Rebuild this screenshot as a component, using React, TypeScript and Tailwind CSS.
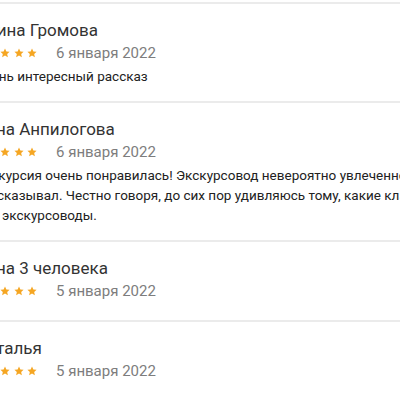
import React from 'react';

const reviews = [
  {
    name: 'Ирина Громова',
    date: '6 января 2022',
    lines: ['Очень интересный рассказ'],
  },
  {
    name: 'Анна Анпилогова',
    date: '6 января 2022',
    lines: [
      'Экскурсия очень понравилась! Экскурсовод невероятно увлеченно',
      'рассказывал. Честно говоря, до сих пор удивляюсь тому, какие классные',
      'там экскурсоводы.',
    ],
  },
  {
    name: 'Анна 3 человека',
    date: '5 января 2022',
    lines: [],
  },
  {
    name: 'Наталья',
    date: '5 января 2022',
    lines: [],
  },
];

function Star() {
  return (
    <svg width="10" height="10" viewBox="0 0 24 24" className="shrink-0">
      <path
        fill="#f5a623"
        d="M12 1l3.3 7.2 7.7.8-5.8 5.2 1.7 7.8L12 18l-6.9 4 1.7-7.8L1 9l7.7-.8z"
      />
    </svg>
  );
}

function Review({ r }: { r: (typeof reviews)[number] }) {
  const hasText = r.lines.length > 0;
  return (
    <div className={`border-t-2 border-[#ebebeb] pt-[14px] ${hasText ? 'pb-[15px]' : 'pb-[18px]'}`}>
      <div className="text-[17px] leading-[24px] text-[#333333] whitespace-nowrap">{r.name}</div>
      <div className="flex items-center h-[22px]">
        <div className="flex items-center gap-[3.5px] ml-[-2px]">
          <Star />
          <Star />
          <Star />
          <Star />
          <Star />
        </div>
        <span className="ml-[19px] text-[15px] text-[#7d7d7d] whitespace-nowrap">{r.date}</span>
      </div>
      {hasText && (
        <div className="mt-[2px] text-[13.5px] leading-[20px] text-[#222222]">
          {r.lines.map((l) => (
            <div key={l} className="whitespace-nowrap">{l}</div>
          ))}
        </div>
      )}
    </div>
  );
}

export default function App() {
  return (
    <div className="w-[400px] h-[400px] overflow-hidden bg-white" style={{ fontFamily: 'Roboto, "Noto Sans", sans-serif' }}>
      <div className="ml-[-25px] w-[560px] pt-[2px]">
        {reviews.map((r) => (
          <Review key={r.name} r={r} />
        ))}
      </div>
    </div>
  );
}
